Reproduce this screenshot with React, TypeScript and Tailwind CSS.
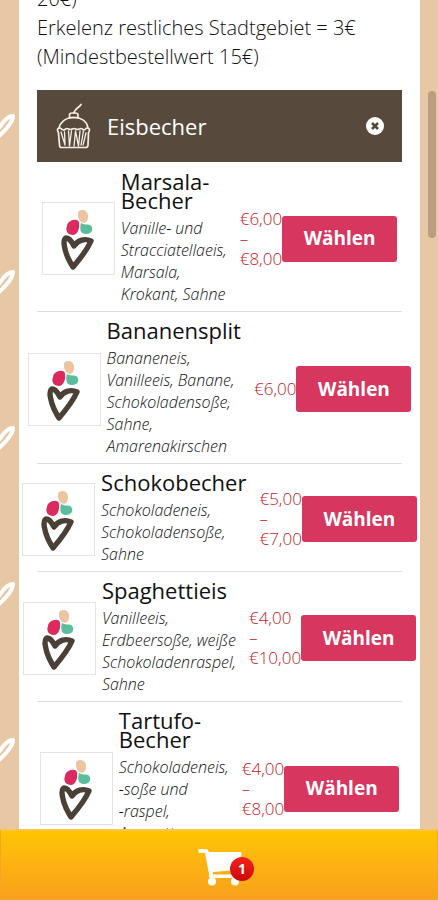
const items = [
  { name: 'Marsala-Becher', description: 'Vanille- und Stracciatellaeis, Marsala, Krokant, Sahne', price: '€6,00 – €8,00' },
  { name: 'Bananensplit', description: 'Bananeneis, Vanilleeis, Banane, Schokoladensoße, Sahne, Amarenakirschen', price: '€6,00' },
  { name: 'Schokobecher', description: 'Schokoladeneis, Schokoladensoße, Sahne', price: '€5,00 – €7,00' },
  { name: 'Spaghettieis', description: 'Vanilleeis, Erdbeersoße, weiße Schokoladenraspel, Sahne', price: '€4,00 – €10,00' },
  { name: 'Tartufo-Becher', description: 'Schokoladeneis, -soße und -\u2060raspel, Amaretto, Sahne', price: '€4,00 – €8,00' },
];

function HeartLogo() {
  return (
    <svg viewBox="0 0 71 71" className="w-full" aria-hidden="true">
      <path d="M36 8c3-2 9-1 9 5 0 4-1 6-4 7-4-1-6-4-6-8 0-2 0-3 1-4z" fill="#ecc5a0" />
      <path d="M26 19c4-3 10-3 10 1 1 6-2 12-6 12-5 0-8-4-6-9 0-2 1-3 2-4z" fill="#dc2a5e" />
      <path d="M38 20c3 2 6 1 9 2 3 2 3 6 0 8-3 2-7 1-9-1-1-3-1-6 0-9z" fill="#5cbd9c" />
      <path
        d="M31 43c-2-4-5-8-8-8-4 2-1 13 2 20 2 4 3 6 5 9 6-7 14-17 18-26-6-3-13-1-17 5z"
        fill="none"
        stroke="#4b4036"
        strokeWidth="5.400"
        strokeLinejoin="round"
      />
    </svg>
  );
}

function CupcakeIcon() {
  return (
    <svg viewBox="0 0 36 46" className="w-9" fill="none" stroke="#f6efe6" strokeWidth="1.7" strokeLinecap="round" strokeLinejoin="round" aria-hidden="true">
      <path d="M26 1.500c-2 3-4 3-5.500 5.500-1 1-1.500 2-1.500 3" />
      <path d="M14.500 15v-3c0-1.500 1-2 2.500-2h3.500c1.500 0 2.500.5 2.500 2v3M14 14.500h9.500" />
      <path d="M4 25c1-5 6-10.500 14.500-10.500S32 19 33 25" />
      <path d="M2.500 27c0-1.500 1-2 2.500-2 1 0 2 2 3.500 2s2-1.500 3.500-1.500 2 1 3.500 1 2-1 3.500-1 2 1 3.500 1 2-1 3.500-1 2 1.500 3 1.500 2-2 3-2c1.500 0 2.500.5 2.500 2s-1 2-1 3L33 42c0 1.500-1 2.500-2.500 2.500h-24C5 44.500 4.500 43.500 4.500 42L3.500 30c0-1-1-1.500-1-3z" />
      <path d="M6 29l4 13M9.500 29l.5 13M13.500 28l1 15 2-15M20.500 28l-1.500 15M20.500 28l3 15 1.500-15M28.500 28l-2.500 14M31 30l-3 12" strokeWidth="1.3" />
    </svg>
  );
}

function CartIcon() {
  return (
    <svg viewBox="0 0 46 40" className="w-[46px]" fill="#fff" aria-hidden="true">
      <path d="M1 2h8l2 3h31c1.500 0 2 1 1.500 2L40 21c-.5 1.500-1.500 2-3 2.200L15 25v2.500h24V31H12c-1-1-1.500-2-1-4L7 6H2C0 6 0 2 1 2z" />
      <circle cx="14" cy="34.500" r="4" />
      <circle cx="37" cy="34.500" r="4" />
    </svg>
  );
}

function Background() {
  return (
    <div className="w-[19px] shrink-0 overflow-hidden" aria-hidden="true">
      {[0, 1, 2, 3, 4, 5].map((i) => (
        <svg key={i} viewBox="0 0 19 156" className="block h-[156px] w-[19px]">
          <path d="M-3 131C3 122 7 116 13 116c0 5-6 13-15 21" fill="none" stroke="#fff" strokeWidth="4" strokeLinecap="round" strokeLinejoin="round" />
        </svg>
      ))}
    </div>
  );
}

export default function App() {
  return (
    <div className="flex h-screen overflow-hidden bg-[#e8c7a4] font-['Open_Sans','Noto_Sans',sans-serif] font-light text-[#111]">
      <Background />

      <main className="min-w-0 flex-1 bg-white px-[18px]">
        <p className="-mt-4 mb-[19px] text-xl leading-[29px]">
          20€)
          <br />
          Erkelenz restliches Stadtgebiet = 3€ (Mindestbestellwert 15€)
        </p>

        <section>
          <div className="flex h-[72px] items-center bg-[#574a3d] px-[18px] text-white">
            <CupcakeIcon />
            <h2 className="ml-4 flex-1 text-[22px] font-normal">Eisbecher</h2>
            <button type="button" aria-label="Schließen">
              <svg viewBox="0 0 18 18" className="size-[18px]" aria-hidden="true">
                <circle cx="9" cy="9" r="9" fill="#fff" />
                <path d="M6 6l6 6M12 6l-6 6" stroke="#574a3d" strokeWidth="2.600" />
              </svg>
            </button>
          </div>

          <ul className="pt-px">
            {items.map((item) => (
              <li key={item.name} className="flex items-center justify-center border-b border-[#dedede] pt-[9px] pb-[6px]">
                <div className="w-[73px] shrink-0 border border-[#e4e4e4]">
                  <HeartLogo />
                </div>
                <div className="ml-[6px] w-min shrink-0 pr-[13px]">
                  <h3 className="mb-[7px] text-[22px] leading-[19px] font-normal">{item.name}</h3>
                  <p className="text-base leading-[22px] italic">{item.description}</p>
                </div>
                <div className="w-min shrink-0 text-[17px] leading-5 text-[#c4201c]">{item.price}</div>
                <button type="button" className="h-[46px] w-[115px] shrink-0 rounded-[3px] bg-[#d7375e] text-[19px] font-bold text-white">
                  Wählen
                </button>
              </li>
            ))}
          </ul>
        </section>
      </main>

      <div className="w-[18px] shrink-0" />
      <div className="fixed top-[91px] right-[2px] h-[147px] w-2 rounded-full bg-[#bd9c84]" aria-hidden="true" />

      <button
        type="button"
        aria-label="Warenkorb"
        className="fixed inset-x-0 bottom-0 flex h-[71px] items-center justify-center border border-t-2 border-[#f5a623] border-t-[#fcc44d] bg-linear-to-b from-[#ffc400] to-[#f9a01b] pt-1"
      >
        <span className="relative ml-1">
          <CartIcon />
          <span className="absolute top-[10px] left-8 flex size-6 items-center justify-center rounded-full bg-linear-to-b from-[#f5201c] to-[#cc0808] text-sm font-bold text-white">
            1
          </span>
        </span>
      </button>
    </div>
  );
}
